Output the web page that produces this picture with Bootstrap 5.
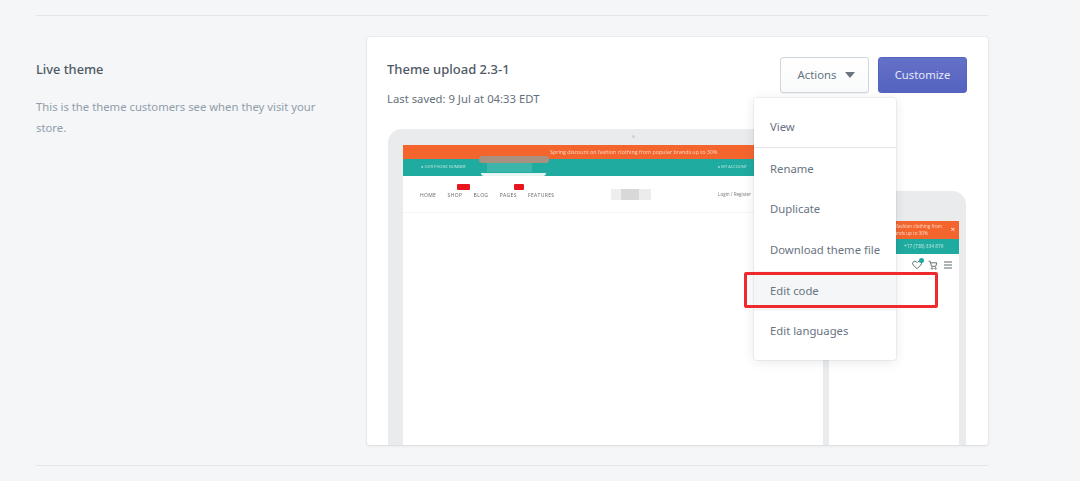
<!doctype html>
<html lang="en">
<head>
  <meta charset="utf-8">
  <title>Live theme</title>
  <meta name="viewport" content="width=device-width, initial-scale=1">
  <link href="https://cdn.jsdelivr.net/npm/bootstrap@5.3.3/dist/css/bootstrap.min.css" rel="stylesheet">
  <style>
    html, body { height: 100%; }
    body { background: #f4f6f8; font-family: "Noto Sans", sans-serif; font-size: 11.3px; color: #454f5b; overflow: hidden; }
    .page-wrap { width: 952px; margin-left: 36px; padding-top: 15px; }
    .rule { height: 1px; background: #e4e7ea; }
    .theme-section { display: flex; padding: 21px 0 20px; }
    .side-col { width: 331px; padding-top: 22px; }
    .side-title { font-size: 12.8px; font-weight: 500; color: #4f5964; line-height: 20px; margin: 0 0 17px; }
    .side-text { width: 285px; color: #929daa; font-size: 11.3px; line-height: 21px; margin: 0; }
    .theme-card { width: 621px; height: 408px; border: 0; border-radius: 3px; background: #fff; box-shadow: 0 0 0 1px rgba(63,63,68,.04), 0 1px 3px rgba(63,63,68,.1); padding: 20px 21px 0; }
    .card-top { height: 72px; }
    .theme-title { font-size: 13px; font-weight: 500; line-height: 24px; color: #4f5964; margin: 0 0 9px -1px; }
    .theme-saved { font-size: 11.3px; line-height: 18px; color: #656f79; margin: 0 0 0 -1px; }
    .btn-actions, .btn-customize { width: 89px; height: 36px; padding: 1px 0 0; font-size: 11.3px; border-radius: 3px; }
    .btn-actions { background: linear-gradient(#fff, #f9fafb); border: 1px solid #cfd6dc; color: #69747f; box-shadow: 0 1px 0 rgba(22,29,37,.05); margin-right: 9px; padding-left: 4px; }
    .btn-customize { background: linear-gradient(#6371c7, #5563c1); border: 1px solid #5664c0; color: #e6e8f8; }
    .caret-down { display: inline-block; margin-left: 9px; border-left: 5px solid transparent; border-right: 5px solid transparent; border-top: 6px solid #69747f; vertical-align: 1px; }
    .preview-area { position: relative; height: 316px; overflow: hidden; }
    .laptop { width: 450px; height: 330px; background: #eaebed; border-radius: 14px 14px 0 0; padding: 16px 15px 0; position: relative; }
    .cam-dot { position: absolute; left: 244px; top: 6px; width: 3px; height: 3px; border-radius: 50%; background: #cfd1d4; }
    .screen { background: #fff; height: 100%; font-family: "Open Sans", sans-serif; filter: blur(.4px); position: relative; }
    .promo { height: 14px; background: #f4652e; color: #f9d5c2; font-size: 5.35px; line-height: 14px; padding-left: 147px; white-space: nowrap; }
    .teal-bar { height: 17px; background: #1fab9f; color: #bfe8e3; font-size: 4px; line-height: 16px; padding: 0 76px 0 18px; display: flex; justify-content: space-between; white-space: nowrap; position: relative; }
    .smudge { position: absolute; background: #a9917f; left: 76px; top: -3px; width: 70px; height: 7px; border-radius: 3px; }
    .smudge-b { position: absolute; background: #3bb4a9; left: 84px; top: 4px; width: 45px; height: 9px; }
    .smudge-c { position: absolute; background: #e6f5f3; left: 78px; top: 14px; width: 65px; height: 3px; border-radius: 0 0 6px 6px; }
    .shop-nav { height: 37px; border-bottom: 1px solid #f6f6f6; display: flex; align-items: center; padding: 3px 0 0 17px; font-size: 5px; color: #666; letter-spacing: .35px; position: relative; }
    .shop-nav span { margin-right: 11.3px; position: relative; }
    .hot-tag { position: absolute; top: 8px; height: 6px; background: #e8151d; border-radius: 1px; }
    .logo-blur { position: absolute; left: 208px; top: 13px; width: 40px; height: 11px; background: linear-gradient(90deg, #eee 0 25%, #d8d8d8 25% 70%, #ececec 70%); }
    .login-link { position: absolute; left: 315px; top: 15px; color: #777; font-size: 4.6px; letter-spacing: 0; }
    .phone { position: absolute; left: 435px; top: 62px; width: 143px; height: 280px; background: #eaebed; border-radius: 14px 14px 0 0; padding: 30px 7px 0 6px; }
    .phone-screen { background: #fff; height: 100%; font-family: "Open Sans", sans-serif; filter: blur(.3px); position: relative; }
    .phone-promo { height: 18px; background: #f4652e; color: #fbdccc; font-size: 4.6px; line-height: 7px; padding: 2px 0 0 26px; white-space: nowrap; position: relative; }
    .promo-second { display: block; padding-left: 17px; }
    .phone-close { position: absolute; right: 4px; top: 3px; color: #fff; font-size: 8px; line-height: 10px; }
    .phone-teal { height: 15px; background: #1fab9f; color: #c5ebe6; font-size: 4.8px; line-height: 15px; padding-left: 75px; white-space: nowrap; }
    .phone-icons { display: flex; justify-content: flex-end; align-items: center; gap: 6px; padding: 6px 7px 0 0; color: #5d6b6f; }
    .fav-icon { position: relative; display: flex; }
    .fav-dot { position: absolute; right: -2px; top: -2px; width: 5px; height: 5px; border-radius: 50%; background: #1fab9f; }
    .menu-panel.dropdown-menu { position: absolute; left: 387px; top: 61px; width: 142px; min-width: 0; height: 262px; margin: 0; padding: 9px 0 8px; border: 0; border-radius: 3px; background: #fff; box-shadow: 0 0 0 1px rgba(6,44,82,.05), 0 2px 12px rgba(33,43,54,.1); display: block; z-index: 5; }
    .menu-panel .dropdown-item { height: 40.7px; line-height: 40.7px; padding: 0 16px; font-size: 11.3px; color: #69747f; position: relative; }
    .menu-panel .dropdown-item.is-hover { background: #f4f6f8; }
    .menu-panel .dropdown-divider { margin: -1px 0 1px; border-color: #e3e6ea; opacity: 1; }
    .mark-box { position: absolute; left: -10px; top: 1px; width: 194px; height: 36px; border: 3px solid #ee2a2e; border-radius: 2px; pointer-events: none; }
  </style>
</head>
<body>

<div class="page-wrap">
  <div class="rule"></div>

  <div class="theme-section">
    <div class="side-col">
      <h2 class="side-title">Live theme</h2>
      <p class="side-text">This is the theme customers see when they visit your store.</p>
    </div>

    <div class="card theme-card">
      <div class="card-top d-flex justify-content-between align-items-start">
        <div>
          <h3 class="theme-title">Theme upload 2.3-1</h3>
          <p class="theme-saved">Last saved: 9 Jul at 04:33 EDT</p>
        </div>
        <div class="d-flex">
          <button type="button" class="btn btn-actions">Actions<i class="caret-down"></i></button>
          <button type="button" class="btn btn-customize">Customize</button>
        </div>
      </div>

      <!-- Device previews -->
      <div class="preview-area">
        <div class="laptop">
          <div class="cam-dot"></div>
          <div class="screen">
            <div class="promo">Spring discount on fashion clothing from popular brands up to 30%</div>
            <div class="teal-bar">
              <span>&#9679; OUR PHONE NUMBER</span>
              <i class="smudge"></i><i class="smudge-b"></i><i class="smudge-c"></i>
              <span>&#9679; MY ACCOUNT</span>
            </div>
            <div class="shop-nav">
              <span>HOME</span><span>SHOP</span><span>BLOG</span><span>PAGES</span><span>FEATURES</span>
              <i class="hot-tag" style="left:54px;width:13px"></i>
              <i class="hot-tag" style="left:111px;width:10px"></i>
              <i class="logo-blur"></i>
              <em class="login-link fst-normal">Login / Register</em>
            </div>
          </div>
        </div>

        <div class="phone">
          <div class="phone-screen">
            <div class="phone-promo">Spring discount on fashion clothing from<span class="promo-second">popular brands up to 30%</span><span class="phone-close">&#215;</span></div>
            <div class="phone-teal">+17 (738) 334 876</div>
            <div class="phone-icons">
              <span class="fav-icon">
                <svg width="10" height="10" viewBox="0 0 16 16" fill="none" stroke="currentColor" stroke-width="1.6"><path d="M8 14 2 8a3.5 3.5 0 0 1 5-5l1 1 1-1a3.5 3.5 0 0 1 5 5z"/></svg>
                <i class="fav-dot"></i>
              </span>
              <svg width="10" height="10" viewBox="0 0 16 16" fill="none" stroke="currentColor" stroke-width="1.5"><path d="M1 2h2.5l2 8h7l1.5-5.5H4.5"/><circle cx="6.5" cy="13.5" r="1.2"/><circle cx="12" cy="13.5" r="1.2"/></svg>
              <svg width="8" height="8" viewBox="0 0 8 8" stroke="currentColor" stroke-width="1.1"><path d="M0 1h8M0 4h8M0 7h8"/></svg>
            </div>
          </div>
        </div>
      </div>

      <div class="dropdown-menu menu-panel">
        <a class="dropdown-item" href="#">View</a>
        <hr class="dropdown-divider">
        <a class="dropdown-item" href="#">Rename</a>
        <a class="dropdown-item" href="#">Duplicate</a>
        <a class="dropdown-item" href="#">Download theme file</a>
        <a class="dropdown-item is-hover" href="#">Edit code<i class="mark-box"></i></a>
        <a class="dropdown-item" href="#">Edit languages</a>
      </div>
    </div>
  </div>

  <div class="rule"></div>
</div>

<script src="https://cdn.jsdelivr.net/npm/bootstrap@5.3.3/dist/js/bootstrap.bundle.min.js"></script>
</body>
</html>
